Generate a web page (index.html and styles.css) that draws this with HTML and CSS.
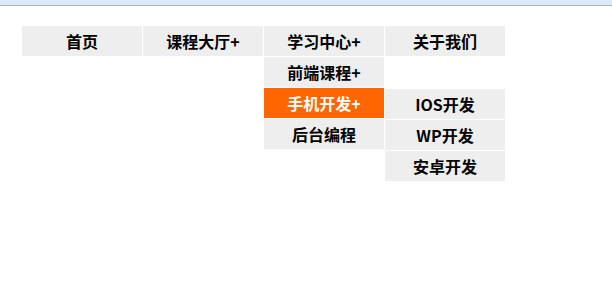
FILE: index.html
```html
<!DOCTYPE html>
<html lang="zh">
<head>
<meta charset="utf-8">
<title>导航菜单</title>
<link rel="stylesheet" href="styles.css">
</head>
<body>
<div class="topbar"></div>
<nav class="page">
  <div class="nav">
    <div class="nav-col"><span class="item">首页</span></div>
    <div class="nav-col"><span class="item">课程大厅+</span></div>
    <div class="nav-col">
      <span class="item">学习中心+</span>
      <div class="dropdown">
        <div class="drop-row"><span class="item">前端课程+</span></div>
        <div class="drop-row split">
          <span class="item active">手机开发+</span>
          <div class="flyout">
            <span class="item">IOS开发</span>
            <span class="item">WP开发</span>
            <span class="item">安卓开发</span>
          </div>
        </div>
        <div class="drop-row"><span class="item">后台编程</span></div>
      </div>
    </div>
    <div class="nav-col"><span class="item">关于我们</span></div>
  </div>
</nav>
</body>
</html>
```

FILE: styles.css
```css
html, body {
  margin: 0;
  padding: 0;
  background: #ffffff;
}
body {
  min-height: 100vh;
}
.topbar {
  height: 5px;
  background: #dbe9f9;
  border-bottom: 1px solid #a7b9cf;
}
.page {
  display: block;
  min-height: 240px;
  padding: 20px 0 0 22px;
}
.nav {
  display: flex;
  align-items: flex-start;
  gap: 1px;
}
.nav-col {
  width: 120px;
  flex: 0 0 120px;
}
.item {
  display: block;
  width: 120px;
  height: 30px;
  line-height: 30px;
  background: #eeeeee;
  color: #000000;
  text-align: center;
  font-family: "Noto Sans CJK SC", "Liberation Sans", sans-serif;
  font-weight: bold;
  font-size: 16px;
}
.item.active {
  background: #ff6600;
  color: #ffffff;
}
.dropdown {
  display: flex;
  flex-direction: column;
  gap: 1px;
  padding-top: 1px;
  width: 120px;
}
.drop-row {
  height: 30px;
}
.split {
  display: flex;
  gap: 1px;
  align-items: flex-start;
}
.split > .item {
  flex: 0 0 120px;
}
.flyout {
  flex: 0 0 120px;
  display: flex;
  flex-direction: column;
  gap: 1px;
  padding-top: 1px;
}
```
